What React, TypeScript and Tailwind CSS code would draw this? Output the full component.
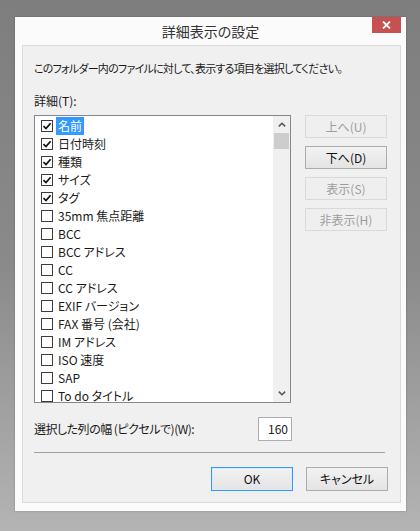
import React from 'react';

const items: { label: string; checked: boolean }[] = [
  { label: '名前', checked: true },
  { label: '日付時刻', checked: true },
  { label: '種類', checked: true },
  { label: 'サイズ', checked: true },
  { label: 'タグ', checked: true },
  { label: '35mm 焦点距離', checked: false },
  { label: 'BCC', checked: false },
  { label: 'BCC アドレス', checked: false },
  { label: 'CC', checked: false },
  { label: 'CC アドレス', checked: false },
  { label: 'EXIF バージョン', checked: false },
  { label: 'FAX 番号 (会社)', checked: false },
  { label: 'IM アドレス', checked: false },
  { label: 'ISO 速度', checked: false },
  { label: 'SAP', checked: false },
  { label: 'To do タイトル', checked: false },
];

function Checkbox({ checked }: { checked: boolean }) {
  return (
    <span className="flex h-[12px] w-[12px] shrink-0 items-center justify-center border border-[#3c3c3c] bg-white">
      {checked && (
        <svg width="10" height="10" viewBox="0 0 10 10" aria-hidden="true">
          <path d="M1.5 5.2 L4 7.6 L8.6 2.2" fill="none" stroke="#111" strokeWidth="1.7" />
        </svg>
      )}
    </span>
  );
}

function SideButton({ label, enabled }: { label: string; enabled?: boolean }) {
  return (
    <button
      className={
        enabled
          ? 'h-[23px] w-[82px] border border-[#acacac] bg-gradient-to-b from-[#f2f2f2] to-[#e4e4e4] text-[12px] text-[#111]'
          : 'h-[23px] w-[82px] border border-[#d9d9d9] bg-[#efefef] text-[12px] text-[#9d9d9d]'
      }
    >
      {label}
    </button>
  );
}

export default function App() {
  return (
    <div className="h-[531px] w-[420px] overflow-hidden bg-gradient-to-b from-[#7e7e7e] via-[#8a8a8a] to-[#b4b4b4] pl-[15px] pt-[17px] font-['Noto_Sans_CJK_JP','Noto_Sans',sans-serif] [font-feature-settings:'palt']">
      {/* window frame */}
      <div className="flex h-[494px] w-[391px] flex-col bg-[#fbfbfb] shadow-[0_0_2px_rgba(0,0,0,0.25)]">
        {/* title bar */}
        <div className="relative flex h-[28px] shrink-0 items-center justify-center">
          <span className="text-[14px] text-[#333]">詳細表示の設定</span>
          <div className="absolute right-[5px] top-0 flex h-[16px] w-[29px] items-center justify-center bg-[#c75050]">
            <svg width="9" height="8" viewBox="0 0 9 8" aria-hidden="true">
              <path d="M1 0.5 L8 7.5 M8 0.5 L1 7.5" stroke="#fff" strokeWidth="1.8" />
            </svg>
          </div>
        </div>

        {/* content */}
        <div className="ml-[7px] mr-[5px] flex h-[458px] flex-col border border-[#dadada] bg-[#f0f0f0] pl-[11px] pr-[12px] text-[12px] text-[#1a1a1a]">
          <p className="mt-[14px] whitespace-nowrap text-[11px] leading-[16px] tracking-[-0.75px]">
            このフォルダー内のファイルに対して、表示する項目を選択してください。
          </p>
          <p className="mt-[17px] leading-[16px]">詳細(T):</p>

          <div className="mt-[6px] flex gap-[14px]">
            {/* list */}
            <div className="relative flex h-[288px] w-[257px] overflow-hidden border border-[#828790] bg-white">
              <ul className="flex-1 pt-[1px]">
                {items.map((item, i) => (
                  <li key={item.label} className="flex h-[18px] items-center pl-[6px]">
                    <Checkbox checked={item.checked} />
                    <span
                      className={
                        i === 0
                          ? 'ml-[3px] flex h-[18px] items-center bg-[#3399ff] px-[2px] text-white'
                          : 'ml-[3px] flex h-[18px] items-center px-[2px]'
                      }
                    >
                      {item.label}
                    </span>
                  </li>
                ))}
              </ul>
              {/* scrollbar */}
              <div className="flex w-[17px] shrink-0 flex-col items-center bg-[#f0f0f0]">
                <div className="flex h-[17px] w-full items-center justify-center">
                  <svg width="8" height="5" viewBox="0 0 8 5" aria-hidden="true">
                    <path d="M0.8 4.4 L4 1.2 L7.2 4.4" fill="none" stroke="#555" strokeWidth="1.5" />
                  </svg>
                </div>
                <div className="h-[16px] w-[15px] bg-[#cdcdcd]" />
                <div className="flex-1" />
                <div className="flex h-[17px] w-full items-center justify-center">
                  <svg width="8" height="5" viewBox="0 0 8 5" aria-hidden="true">
                    <path d="M0.8 0.6 L4 3.8 L7.2 0.6" fill="none" stroke="#555" strokeWidth="1.5" />
                  </svg>
                </div>
              </div>
            </div>

            {/* side buttons */}
            <div className="flex flex-col gap-[8px]">
              <SideButton label="上へ(U)" />
              <SideButton label="下へ(D)" enabled />
              <SideButton label="表示(S)" />
              <SideButton label="非表示(H)" />
            </div>
          </div>

          {/* width row */}
          <div className="mt-[14px] flex w-[258px] items-center justify-between">
            <span className="tracking-[-0.5px]">選択した列の幅 (ピクセルで)(W):</span>
            <div className="flex h-[24px] w-[34px] items-center justify-end border border-[#abadb3] bg-white pr-[3px]">
              160
            </div>
          </div>

          <div className="mt-[11px] mr-[3px] h-px bg-[#a0a0a0]" />

          <div className="mt-[14px] flex justify-end gap-[13px]">
            <button className="h-[24px] w-[82px] border border-[#3399ff] bg-gradient-to-b from-[#f2f2f2] to-[#e4e4e4] text-[12px] text-[#111] shadow-[inset_0_0_0_1px_#d9eaf9]">
              OK
            </button>
            <button className="h-[24px] w-[82px] border border-[#acacac] bg-gradient-to-b from-[#f2f2f2] to-[#e4e4e4] text-[12px] text-[#111]">
              キャンセル
            </button>
          </div>
        </div>
      </div>
    </div>
  );
}
